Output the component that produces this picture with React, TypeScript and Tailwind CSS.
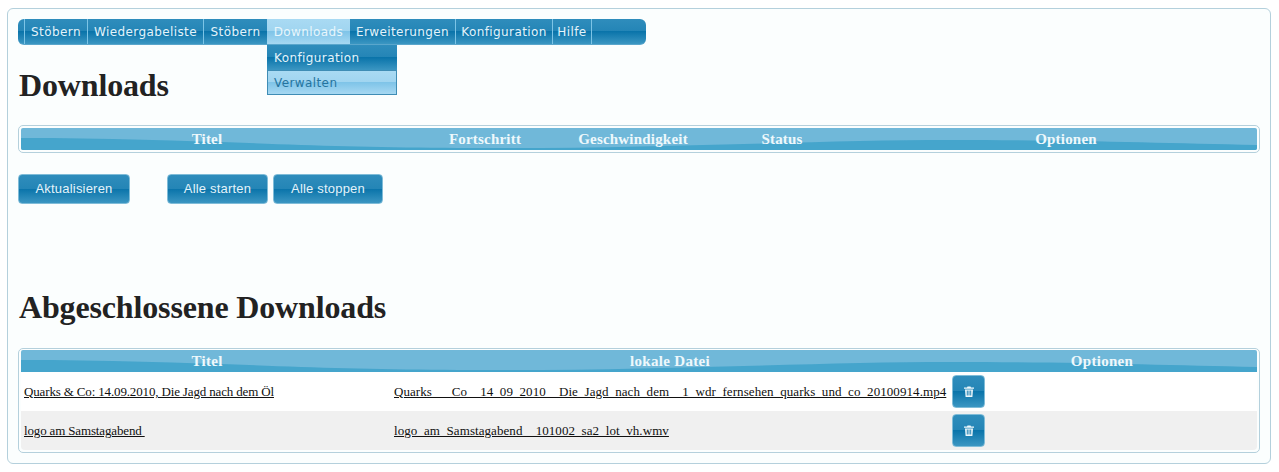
const menuItems = [
  { label: "Stöbern", width: "w-[63px]" },
  { label: "Wiedergabeliste", width: "w-[116px]" },
  { label: "Stöbern", width: "w-[64px]" },
  { label: "Downloads", width: "w-[83px]", active: true },
  { label: "Erweiterungen", width: "w-[105px]", afterActive: true },
  { label: "Konfiguration", width: "w-[97px]" },
  { label: "Hilfe", width: "w-[40px]" },
];

const glossy = "bg-[linear-gradient(#2f8dbc_0%,#2485b6_49%,#0a74aa_50%,#3b96c2_100%)]";
const glossyLight = "bg-[linear-gradient(#a9daf3_0%,#a0d5f0_49%,#7fc4e8_50%,#a6d8f2_100%)]";

function HeaderWave() {
  return (
    <svg className="absolute inset-0 w-full h-full" viewBox="0 0 1236 22" preserveAspectRatio="none">
      <rect width="1236" height="22" fill="#70b8d9" />
      <path d="M0 10 C100 10 200 14 280 17 C340 19 400 20 480 20 C650 20 800 12 930 12 C1050 12 1140 15 1236 17 V22 H0 Z" fill="#45a5cc" />
    </svg>
  );
}

function TrashIcon() {
  return (
    <svg className="w-[10px] h-[11px]" viewBox="0 0 10 11" fill="#eef8fc">
      <path d="M3.5 0.5h3l0.5 1h3v1.2H0V1.500h3z" />
      <path d="M1 3.400h8L8.400 11H1.600zM2.800 4.600v5h0.900v-5zM4.550 4.600v5h0.900v-5zM6.300 4.600v5h0.900v-5z" fillRule="evenodd" />
    </svg>
  );
}

function HeaderCell({ label }: { label: string }) {
  return <div className="relative text-center">{label}</div>;
}

function ActionButton({ label, width }: { label: string; width: string }) {
  return (
    <button className={`${width} h-[30px] rounded-[4px] border border-[#7fbcd8] ${glossy} text-[13px] tracking-[0.2px] text-[#e4f3fa] font-['Liberation_Sans',sans-serif]`}>
      {label}
    </button>
  );
}

const finished = [
  {
    title: "Quarks & Co: 14.09.2010, Die Jagd nach dem Öl",
    file: "Quarks___Co__14_09_2010__Die_Jagd_nach_dem__1_wdr_fernsehen_quarks_und_co_20100914.mp4",
  },
  {
    title: "logo am Samstagabend ",
    file: "logo_am_Samstagabend__101002_sa2_lot_vh.wmv",
  },
];

export default function App() {
  return (
    <div className="bg-white h-[472px] pt-[8px] pl-[7px] pr-[8px] font-['Liberation_Serif',serif]">
      <div className="h-[456px] border border-[#b4d0dc] rounded-[6px] bg-[#fbfefe] pt-[10px] pl-[10px] pr-[9px]">
        <nav className={`relative w-[628px] h-[26px] rounded-[6px] border-b border-[#5aa6cc] pl-[6px] flex ${glossy} font-['DejaVu_Sans',sans-serif] text-[12px] tracking-[0.4px] text-[#e4f3fa]`}>
          {menuItems.map((item, i) => (
            <div
              key={i}
              className={`${item.width} relative flex items-center justify-center border-[#7cc4e6] ${
                item.active ? `${glossyLight} text-[#e8f6fc]` : item.afterActive ? "" : "border-l"
              } ${i === menuItems.length - 1 ? "border-r" : ""}`}
            >
              {item.label}
              {item.active && (
                <div className="absolute left-0 top-[26px] w-[130px] z-10">
                  <div className={`h-[25px] pl-[7px] flex items-center ${glossy} text-[#e4f3fa]`}>Konfiguration</div>
                  <div className={`h-[25px] pl-[6px] flex items-center ${glossyLight} text-[#25749f] border border-[#3f8db5]`}>Verwalten</div>
                </div>
              )}
            </div>
          ))}
        </nav>

        <h1 className="mt-[22px] pl-[1px] h-[37px] text-[32px] tracking-[-0.15px] leading-[37px] font-bold text-[#222]">Downloads</h1>

        <div className="mt-[21px] w-[1242px] h-[28px] rounded-[5px] border border-[#b4d0dc] p-[2px]">
          <div className="relative h-[22px] overflow-hidden rounded-[2px]">
            <HeaderWave />
            <div className="relative grid grid-cols-[372px_184px_112px_186px_382px] text-[15px] tracking-[0.2px] leading-[22px] font-bold text-[#eef8fc]">
              <HeaderCell label="Titel" />
              <HeaderCell label="Fortschritt" />
              <HeaderCell label="Geschwindigkeit" />
              <HeaderCell label="Status" />
              <HeaderCell label="Optionen" />
            </div>
          </div>
        </div>

        <div className="mt-[21px] flex">
          <ActionButton label="Aktualisieren" width="w-[112px]" />
          <div className="ml-[37px] flex gap-[5px]">
            <ActionButton label="Alle starten" width="w-[101px]" />
            <ActionButton label="Alle stoppen" width="w-[110px]" />
          </div>
        </div>

        <h2 className="mt-[85px] pl-[1px] h-[37px] text-[32px] tracking-[-0.15px] leading-[37px] font-bold text-[#222]">Abgeschlossene Downloads</h2>

        <div className="mt-[22px] w-[1242px] h-[105px] rounded-[5px] border border-[#b4d0dc] pt-[1px] px-[2px]">
          <div className="relative h-[22px] overflow-hidden rounded-t-[2px]">
            <HeaderWave />
            <div className="relative grid grid-cols-[372px_554px_310px] text-[15px] tracking-[0.3px] leading-[22px] font-bold text-[#eef8fc]">
              <HeaderCell label="Titel" />
              <HeaderCell label="lokale Datei" />
              <HeaderCell label="Optionen" />
            </div>
          </div>
          {finished.map((row, i) => (
            <div
              key={i}
              className={`h-[39px] grid grid-cols-[372px_559px_1fr] items-center text-[13px] text-[#111] ${
                i === 1 ? "bg-[#f0f0f0] rounded-b-[4px]" : "bg-white"
              }`}
            >
              <a className="pl-[3px] underline whitespace-pre tracking-[-0.15px]">{row.title}</a>
              <a className="pl-[1px] underline whitespace-pre tracking-[0.07px]">{row.file}</a>
              <button className={`w-[33px] h-[33px] rounded-[4px] border border-[#7fbcd8] flex items-center justify-center ${glossy}`}>
                <TrashIcon />
              </button>
            </div>
          ))}
        </div>
      </div>
    </div>
  );
}
